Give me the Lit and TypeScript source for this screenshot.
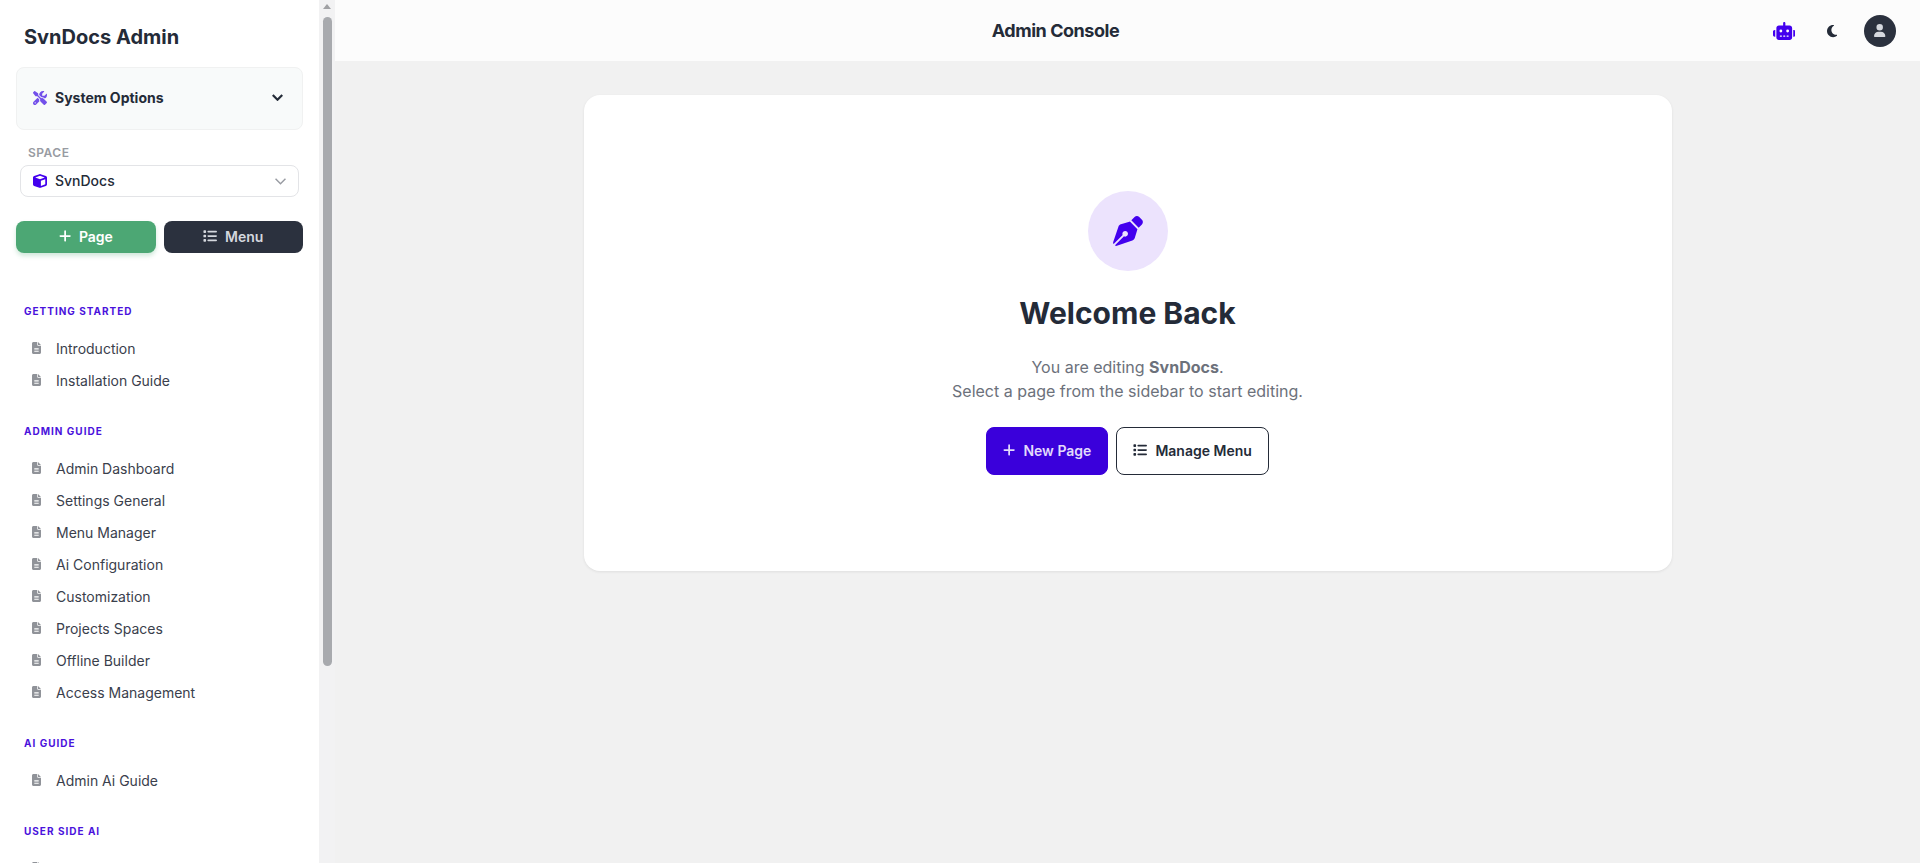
import { LitElement, html, css, svg } from "lit";
import { customElement, state } from "lit/decorators.js";

type Icon = { box: string; paths: string[] };

const ICONS: Record<string, Icon> = {
  tools: {
    box: "0 0 512 512",
    paths: [
      "M78.6 5C69.1-2.4 55.6-1.5 47 7L7 47c-8.5 8.5-9.4 22-2.1 31.6l80 104c4.5 5.9 11.6 9.4 19 9.4h54.1l109 109c-14.7 29-10 65.4 14.3 89.6l112 112c12.5 12.5 32.8 12.5 45.3 0l64-64c12.5-12.5 12.5-32.8 0-45.3l-112-112c-24.2-24.2-60.6-29-89.6-14.3l-109-109V104c0-7.5-3.5-14.5-9.4-19L78.6 5zM19.9 396.1C7.2 408.8 0 426.1 0 444.1C0 481.6 30.4 512 67.9 512c18 0 35.3-7.2 48-19.9L233.7 374.3c-7.8-20.9-9-43.6-3.6-65.1l-61.7-61.7L19.9 396.1zM512 144c0-10.5-1.1-20.7-3.2-30.5c-2.4-11.2-16.1-14.1-24.2-6l-63.9 63.9c-3 3-7.1 4.7-11.3 4.7H352c-8.8 0-16-7.2-16-16V102.6c0-4.2 1.7-8.3 4.7-11.3l63.9-63.9c8.1-8.1 5.2-21.8-6-24.2C388.7 1.1 378.5 0 368 0C288.5 0 224 64.5 224 144l0 .8 85.3 85.3c36-9.1 75.8 .5 104 28.7L429 274.5c49-23 83-72.8 83-130.5zM56 432a24 24 0 1 1 48 0 24 24 0 1 1 -48 0z",
    ],
  },
  cube: {
    box: "0 0 512 512",
    paths: [
      "M234.5 5.7c13.9-5 29.1-5 43.1 0l192 68.6C495 83.4 512 107.5 512 134.6V377.4c0 27-17 51.2-42.5 60.3l-192 68.6c-13.9 5-29.1 5-43.1 0l-192-68.6C17 428.6 0 404.5 0 377.4V134.6c0-27 17-51.2 42.5-60.3l192-68.6zM256 66L82.3 128 256 190l173.7-62L256 66zm32 368.6l160-57.1v-188L288 246.6v188z",
    ],
  },
  plus: {
    box: "0 0 448 512",
    paths: [
      "M256 80c0-17.7-14.3-32-32-32s-32 14.3-32 32V224H48c-17.7 0-32 14.3-32 32s14.3 32 32 32H192V432c0 17.7 14.3 32 32 32s32-14.3 32-32V288H400c17.7 0 32-14.3 32-32s-14.3-32-32-32H256V80z",
    ],
  },
  list: {
    box: "0 0 512 512",
    paths: [
      "M40 48C26.7 48 16 58.7 16 72v48c0 13.3 10.7 24 24 24H88c13.3 0 24-10.7 24-24V72c0-13.3-10.7-24-24-24H40zM192 64c-17.7 0-32 14.3-32 32s14.3 32 32 32H480c17.7 0 32-14.3 32-32s-14.3-32-32-32H192zm0 160c-17.7 0-32 14.3-32 32s14.3 32 32 32H480c17.7 0 32-14.3 32-32s-14.3-32-32-32H192zm0 160c-17.7 0-32 14.3-32 32s14.3 32 32 32H480c17.7 0 32-14.3 32-32s-14.3-32-32-32H192zM16 232v48c0 13.3 10.7 24 24 24H88c13.3 0 24-10.7 24-24V232c0-13.3-10.7-24-24-24H40c-13.3 0-24 10.7-24 24zM40 368c-13.3 0-24 10.7-24 24v48c0 13.3 10.7 24 24 24H88c13.3 0 24-10.7 24-24V392c0-13.3-10.7-24-24-24H40z",
    ],
  },
  file: {
    box: "0 0 384 512",
    paths: [
      "M64 0C28.7 0 0 28.7 0 64V448c0 35.3 28.7 64 64 64H320c35.3 0 64-28.7 64-64V160H256c-17.7 0-32-14.3-32-32V0H64zM256 0V128H384L256 0zM112 256H272c8.8 0 16 7.2 16 16s-7.2 16-16 16H112c-8.8 0-16-7.2-16-16s7.2-16 16-16zm0 64H272c8.8 0 16 7.2 16 16s-7.2 16-16 16H112c-8.8 0-16-7.2-16-16s7.2-16 16-16zm0 64H272c8.8 0 16 7.2 16 16s-7.2 16-16 16H112c-8.8 0-16-7.2-16-16s7.2-16 16-16z",
    ],
  },
  robot: {
    box: "0 0 640 512",
    paths: [
      "M320 0c17.7 0 32 14.3 32 32V96H472c39.8 0 72 32.2 72 72V440c0 39.8-32.2 72-72 72H168c-39.8 0-72-32.2-72-72V168c0-39.8 32.2-72 72-72H288V32c0-17.7 14.3-32 32-32zM208 384c-8.8 0-16 7.2-16 16s7.2 16 16 16h32c8.8 0 16-7.2 16-16s-7.2-16-16-16H208zm96 0c-8.8 0-16 7.2-16 16s7.2 16 16 16h32c8.8 0 16-7.2 16-16s-7.2-16-16-16H304zm96 0c-8.8 0-16 7.2-16 16s7.2 16 16 16h32c8.8 0 16-7.2 16-16s-7.2-16-16-16H400zM264 256a40 40 0 1 0 -80 0 40 40 0 1 0 80 0zm152 40a40 40 0 1 0 0-80 40 40 0 1 0 0 80zM48 224H64V416H48c-26.5 0-48-21.5-48-48V272c0-26.5 21.5-48 48-48zm544 0c26.5 0 48 21.5 48 48v96c0 26.5-21.5 48-48 48H576V224h16z",
    ],
  },
  moon: {
    box: "0 0 384 512",
    paths: [
      "M223.5 32C100 32 0 132.3 0 256S100 480 223.5 480c60.6 0 115.5-24.2 155.8-63.4c5-4.9 6.3-12.5 3.1-18.7s-10.1-9.7-17-8.5c-9.8 1.7-19.8 2.6-30.1 2.6c-96.9 0-175.5-78.8-175.5-176c0-65.8 36-123.1 89.3-153.3c6.1-3.5 9.2-10.5 7.7-17.3s-7.3-11.9-14.3-12.5c-6.3-.5-12.6-.8-19-.8z",
    ],
  },
  user: {
    box: "0 0 448 512",
    paths: [
      "M224 256A128 128 0 1 0 224 0a128 128 0 1 0 0 256zm-45.7 48C79.8 304 0 383.8 0 482.3C0 498.7 13.3 512 29.7 512H418.3c16.4 0 29.7-13.3 29.7-29.7C448 383.8 368.2 304 269.7 304H178.3z",
    ],
  },
  nib: {
    box: "0 0 512 512",
    paths: [
      "M368.4 18.3L312.7 74.1 437.9 199.3l55.7-55.7c21.9-21.9 21.9-57.3 0-79.2L447.6 18.3c-21.9-21.9-57.3-21.9-79.2 0zM288 94.6l-9.2 2.8L134.7 140.6c-19.9 6-35.7 21.2-42.3 41L3.8 445.8c-3.8 11.3-1 23.9 7.3 32.4L164.7 324.7c-3-6.3-4.7-13.3-4.7-20.7c0-26.5 21.5-48 48-48s48 21.5 48 48s-21.5 48-48 48c-7.4 0-14.4-1.7-20.7-4.7L33.7 500.9c8.6 8.3 21.1 11.2 32.4 7.3l264.3-88.6c19.7-6.6 35-22.4 41-42.3l43.2-144.1 2.8-9.2L288 94.6z",
    ],
  },
};

const icon = (name: string, cls = "") => html`<svg
  class="icon ${cls}"
  viewBox=${ICONS[name].box}
  fill="currentColor"
  aria-hidden="true"
>
  ${ICONS[name].paths.map((d) => svg`<path d=${d} fill-rule="evenodd"></path>`)}
</svg>`;

const SECTIONS = [
  { title: "Getting Started", pages: ["Introduction", "Installation Guide"] },
  {
    title: "Admin Guide",
    pages: [
      "Admin Dashboard",
      "Settings General",
      "Menu Manager",
      "Ai Configuration",
      "Customization",
      "Projects Spaces",
      "Offline Builder",
      "Access Management",
    ],
  },
  { title: "Ai Guide", pages: ["Admin Ai Guide"] },
  { title: "User Side Ai", pages: ["User Ai Guide"] },
];

const shared = css`
  :host {
    box-sizing: border-box;
    font-family: Inter, "Liberation Sans", sans-serif;
    color: #242b38;
  }
  *,
  *::before,
  *::after {
    box-sizing: border-box;
  }
  .icon {
    display: block;
    flex: none;
    height: 14px;
  }
  button {
    font: inherit;
    color: inherit;
    cursor: pointer;
    margin: 0;
  }
`;

@customElement("docs-sidebar")
export class DocsSidebar extends LitElement {
  @state() private optionsOpen = false;

  static styles = [
    shared,
    css`
      :host {
        display: flex;
        height: 100%;
        background: #fff;
      }
      .content {
        width: 319px;
        overflow: hidden;
        padding: 21px 16px 0;
      }
      .brand {
        margin: 0;
        padding: 0 8px;
        font-size: 20px;
        line-height: 32px;
        font-weight: 700;
      }
      .options {
        display: flex;
        align-items: center;
        gap: 8px;
        width: 100%;
        height: 63px;
        margin-top: 14px;
        padding: 0 19px 2px 16px;
        border: 1px solid #f0f1f1;
        border-radius: 8px;
        background: #f8fafa;
        font-size: 14px;
        font-weight: 700;
        text-align: left;
      }
      .options .label {
        flex: 1;
      }
      .tools {
        color: #7350ea;
      }
      .chevron {
        width: 11px;
        height: 7px;
        fill: none;
        stroke: currentColor;
        stroke-width: 2;
      }
      .space {
        padding: 15px 4px 0;
      }
      .space label {
        display: block;
        padding: 0 8px;
        font-size: 12px;
        line-height: 16px;
        font-weight: 600;
        letter-spacing: 0.5px;
        color: #989ba2;
      }
      .picker {
        display: grid;
        align-items: center;
        margin-top: 4px;
      }
      .picker > * {
        grid-area: 1 / 1;
      }
      .picker .icon {
        pointer-events: none;
      }
      .cube {
        margin-left: 13px;
        color: #4300ee;
      }
      .picker .chevron {
        justify-self: end;
        margin-right: 13px;
        color: #989ba2;
        stroke-width: 1.3;
      }
      select {
        appearance: none;
        width: 100%;
        height: 32px;
        padding: 0 32px 0 34px;
        border: 1px solid #e3e4e7;
        border-radius: 8px;
        background: #fff;
        font: 500 14px/20px Inter, "Liberation Sans", sans-serif;
        color: #242b38;
      }
      .actions {
        display: grid;
        grid-template-columns: 1fr 1fr;
        gap: 8px;
        margin-top: 24px;
      }
      .actions button {
        display: flex;
        align-items: center;
        justify-content: center;
        gap: 8px;
        height: 32px;
        padding: 0 0 2px;
        border: 0;
        border-radius: 8px;
        font-size: 14px;
        font-weight: 600;
      }
      .actions .page {
        background: #4ca774;
        color: #fff;
        box-shadow: 0 3px 4px #4ca77440;
      }
      .actions .menu {
        background: #2b313e;
        color: #d5d8de;
      }
      nav {
        margin-top: 23px;
      }
      nav h2 {
        margin: 0 0 13px;
        padding: 27px 8px 0;
        font-size: 10px;
        line-height: 16px;
        font-weight: 700;
        letter-spacing: 1px;
        text-transform: uppercase;
        color: #4a12dc;
      }
      ul {
        margin: 0;
        padding: 0;
        list-style: none;
      }
      .link {
        display: flex;
        align-items: center;
        gap: 15px;
        height: 32px;
        padding: 0 16px;
        font-size: 14px;
        color: #3a404c;
        text-decoration: none;
        white-space: nowrap;
      }
      .file {
        width: 9px;
        height: 12px;
        color: #909399;
      }
      .scrollbar {
        display: flex;
        flex-direction: column;
        align-items: center;
        width: 16px;
        padding-top: 4px;
        background: #f2f2f3;
      }
      .arrow {
        width: 8px;
        height: 5px;
        fill: #a0a1a4;
      }
      .thumb {
        width: 9px;
        height: calc(75% + 5px);
        margin-top: 8px;
        border-radius: 5px;
        background: #a8aaae;
      }
    `,
  ];

  render() {
    return html`
      <div class="content">
        <h1 class="brand">SvnDocs Admin</h1>
        <button
          class="options"
          aria-expanded=${this.optionsOpen}
          @click=${() => (this.optionsOpen = !this.optionsOpen)}
        >
          ${icon("tools", "tools")}
          <span class="label">System Options</span>
          <svg class="icon chevron" viewBox="0 0 10 6"><path d="M.7.7 5 5 9.3.7" /></svg>
        </button>
        <div class="space">
          <label for="space">SPACE</label>
          <div class="picker">
            <select id="space">
              <option>SvnDocs</option>
            </select>
            ${icon("cube", "cube")}
            <svg class="icon chevron" viewBox="0 0 10 6"><path d="M.5.5 5 5 9.5.5" /></svg>
          </div>
        </div>
        <div class="actions">
          <button class="page">${icon("plus")}Page</button>
          <button class="menu">${icon("list")}Menu</button>
        </div>
        <nav aria-label="Pages">
          ${SECTIONS.map(
            (s) => html`<h2>${s.title}</h2>
              <ul>
                ${s.pages.map(
                  (p) => html`<li><a class="link" href="#">${icon("file", "file")}${p}</a></li>`
                )}
              </ul>`
          )}
        </nav>
      </div>
      <div class="scrollbar" aria-hidden="true">
        <svg class="arrow" viewBox="0 0 8 5"><path d="M4 0 8 5H0z" /></svg>
        <div class="thumb"></div>
      </div>
    `;
  }
}

@customElement("app-root")
export class AppRoot extends LitElement {
  static styles = [
    shared,
    css`
      :host {
        display: grid;
        grid-template-columns: auto 1fr;
        height: 100vh;
        overflow: hidden;
        background: #f1f1f1;
      }
      docs-sidebar {
        height: 100vh;
      }
      header {
        display: flex;
        align-items: center;
        gap: 16px;
        height: 61px;
        padding: 0 24px;
        background: #fcfcfc;
      }
      .title {
        flex: 1;
        margin: 0;
        text-align: center;
        font-size: 18px;
        line-height: 28px;
        font-weight: 700;
        letter-spacing: -0.45px;
      }
      .tools {
        display: flex;
        align-items: center;
        gap: 16px;
      }
      .tool {
        display: grid;
        place-items: center;
        width: 32px;
        height: 32px;
        padding: 0;
        border: 0;
        border-radius: 50%;
        background: none;
      }
      .robot {
        height: 18px;
        color: #4300ee;
      }
      .moon {
        height: 14px;
      }
      .avatar {
        background: #2b313e;
        color: #d5d8de;
      }
      .user {
        height: 13px;
      }
      main {
        width: 100%;
        max-width: 1152px;
        margin: 0 auto;
        padding: 34px 32px;
      }
      .card {
        display: flex;
        flex-direction: column;
        align-items: center;
        padding: 96px 32px;
        border-radius: 16px;
        background: #fff;
        box-shadow: 0 1px 3px #00000014;
        text-align: center;
      }
      .badge {
        display: grid;
        place-items: center;
        width: 80px;
        height: 80px;
        border-radius: 50%;
        background: #ece3fd;
        color: #4300ee;
      }
      .nib {
        height: 30px;
      }
      h2 {
        margin: 24px 0 0;
        font-size: 30px;
        line-height: 36px;
        font-weight: 700;
      }
      p {
        margin: 24px 0 0;
        font-size: 16px;
        line-height: 24px;
        color: #6c717b;
      }
      .actions {
        display: flex;
        gap: 8px;
        margin-top: 24px;
      }
      .actions button {
        display: flex;
        align-items: center;
        gap: 8px;
        height: 48px;
        padding: 0 16px 2px;
        border: 1px solid #242b38;
        border-radius: 8px;
        background: #fff;
        font-size: 14px;
        font-weight: 600;
      }
      .actions .primary {
        border-color: #3a00db;
        background: #3a00db;
        color: #e2dafc;
      }
    `,
  ];

  render() {
    return html`
      <docs-sidebar></docs-sidebar>
      <div class="body">
        <header>
          <h1 class="title">Admin Console</h1>
          <div class="tools">
            <button class="tool" aria-label="AI assistant">${icon("robot", "robot")}</button>
            <button class="tool" aria-label="Toggle theme">${icon("moon", "moon")}</button>
            <button class="tool avatar" aria-label="Account">${icon("user", "user")}</button>
          </div>
        </header>
        <main>
          <section class="card">
            <div class="badge">${icon("nib", "nib")}</div>
            <h2>Welcome Back</h2>
            <p>
              You are editing <strong>SvnDocs</strong>.<br />Select a page from the sidebar to start
              editing.
            </p>
            <div class="actions">
              <button class="primary">${icon("plus")}New Page</button>
              <button>${icon("list")}Manage Menu</button>
            </div>
          </section>
        </main>
      </div>
    `;
  }
}
